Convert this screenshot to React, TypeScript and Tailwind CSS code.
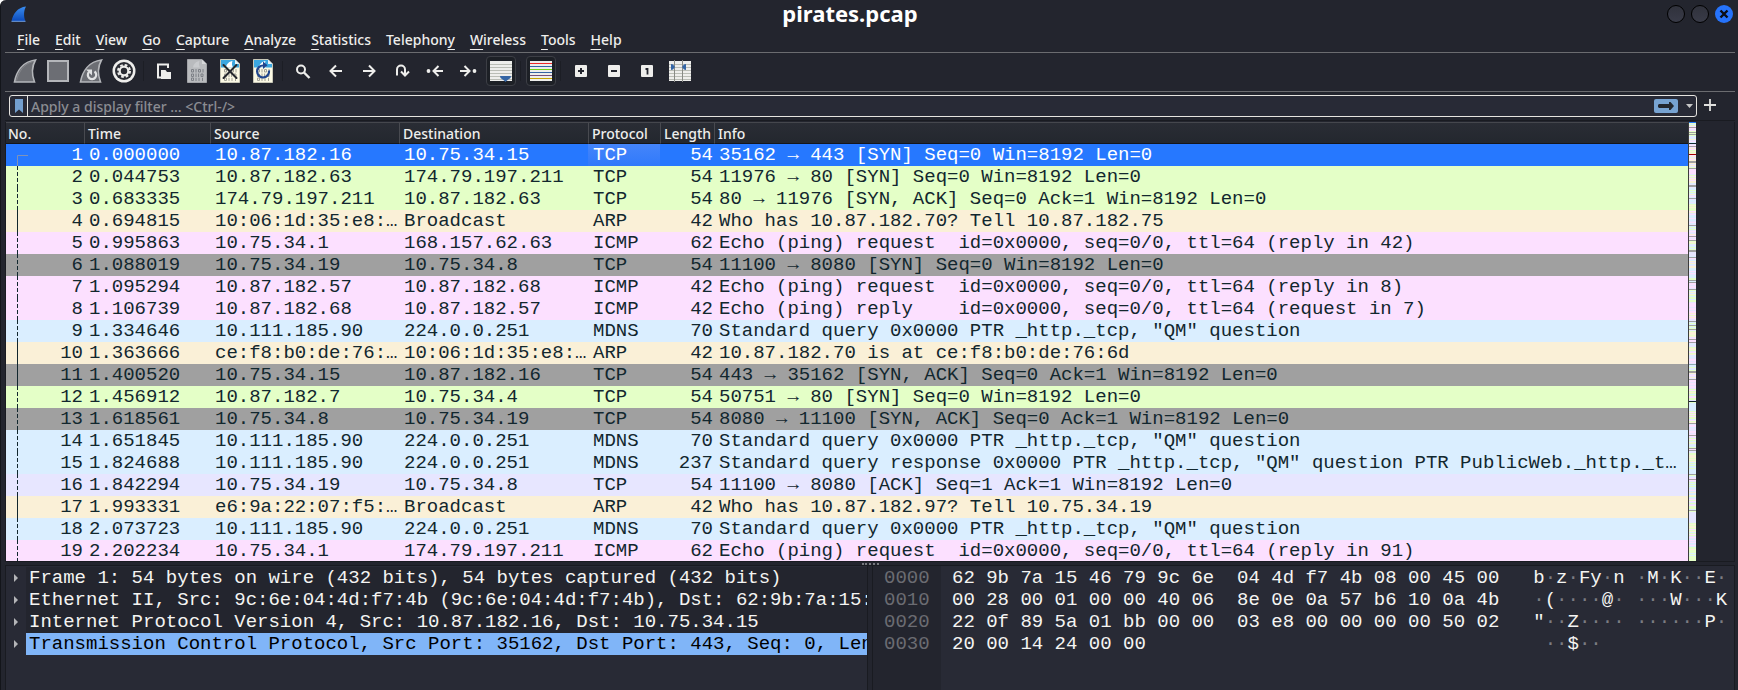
import type { ReactNode } from "react";

const tones = {
  tcp: "bg-[#e7e6ff]",
  http: "bg-[#e4ffc7]",
  arp: "bg-[#faf0d7]",
  icmp: "bg-[#fce0ff]",
  syn: "bg-[#a0a0a0]",
  udp: "bg-[#daeeff]",
  selected: "bg-[#2678ff] text-white",
};

type Tone = keyof typeof tones;
type Packet = [Tone, string, string, string, string, string, string];

const packets: Packet[] = [
  ["selected", "0.000000", "10.87.182.16", "10.75.34.15", "TCP", "54", "35162 → 443 [SYN] Seq=0 Win=8192 Len=0"],
  ["http", "0.044753", "10.87.182.63", "174.79.197.211", "TCP", "54", "11976 → 80 [SYN] Seq=0 Win=8192 Len=0"],
  ["http", "0.683335", "174.79.197.211", "10.87.182.63", "TCP", "54", "80 → 11976 [SYN, ACK] Seq=0 Ack=1 Win=8192 Len=0"],
  ["arp", "0.694815", "10:06:1d:35:e8:…", "Broadcast", "ARP", "42", "Who has 10.87.182.70? Tell 10.87.182.75"],
  ["icmp", "0.995863", "10.75.34.1", "168.157.62.63", "ICMP", "62", "Echo (ping) request  id=0x0000, seq=0/0, ttl=64 (reply in 42)"],
  ["syn", "1.088019", "10.75.34.19", "10.75.34.8", "TCP", "54", "11100 → 8080 [SYN] Seq=0 Win=8192 Len=0"],
  ["icmp", "1.095294", "10.87.182.57", "10.87.182.68", "ICMP", "42", "Echo (ping) request  id=0x0000, seq=0/0, ttl=64 (reply in 8)"],
  ["icmp", "1.106739", "10.87.182.68", "10.87.182.57", "ICMP", "42", "Echo (ping) reply    id=0x0000, seq=0/0, ttl=64 (request in 7)"],
  ["udp", "1.334646", "10.111.185.90", "224.0.0.251", "MDNS", "70", 'Standard query 0x0000 PTR _http._tcp, "QM" question'],
  ["arp", "1.363666", "ce:f8:b0:de:76:…", "10:06:1d:35:e8:…", "ARP", "42", "10.87.182.70 is at ce:f8:b0:de:76:6d"],
  ["syn", "1.400520", "10.75.34.15", "10.87.182.16", "TCP", "54", "443 → 35162 [SYN, ACK] Seq=0 Ack=1 Win=8192 Len=0"],
  ["http", "1.456912", "10.87.182.7", "10.75.34.4", "TCP", "54", "50751 → 80 [SYN] Seq=0 Win=8192 Len=0"],
  ["syn", "1.618561", "10.75.34.8", "10.75.34.19", "TCP", "54", "8080 → 11100 [SYN, ACK] Seq=0 Ack=1 Win=8192 Len=0"],
  ["udp", "1.651845", "10.111.185.90", "224.0.0.251", "MDNS", "70", 'Standard query 0x0000 PTR _http._tcp, "QM" question'],
  ["udp", "1.824688", "10.111.185.90", "224.0.0.251", "MDNS", "237", 'Standard query response 0x0000 PTR _http._tcp, "QM" question PTR PublicWeb._http._t…'],
  ["tcp", "1.842294", "10.75.34.19", "10.75.34.8", "TCP", "54", "11100 → 8080 [ACK] Seq=1 Ack=1 Win=8192 Len=0"],
  ["arp", "1.993331", "e6:9a:22:07:f5:…", "Broadcast", "ARP", "42", "Who has 10.87.182.97? Tell 10.75.34.19"],
  ["udp", "2.073723", "10.111.185.90", "224.0.0.251", "MDNS", "70", 'Standard query 0x0000 PTR _http._tcp, "QM" question'],
  ["icmp", "2.202234", "10.75.34.1", "174.79.197.211", "ICMP", "62", "Echo (ping) request  id=0x0000, seq=0/0, ttl=64 (reply in 91)"],
];

const columns = [
  { name: "No.", width: "w-[78px]" },
  { name: "Time", width: "w-[126px]" },
  { name: "Source", width: "w-[189px]" },
  { name: "Destination", width: "w-[189px]" },
  { name: "Protocol", width: "w-[72px]" },
  { name: "Length", width: "w-[54px]" },
  { name: "Info", width: "" },
];

const menus: [string, string, string][] = [
  ["", "F", "ile"],
  ["", "E", "dit"],
  ["", "V", "iew"],
  ["", "G", "o"],
  ["", "C", "apture"],
  ["", "A", "nalyze"],
  ["", "S", "tatistics"],
  ["Telephon", "y", ""],
  ["", "W", "ireless"],
  ["", "T", "ools"],
  ["", "H", "elp"],
];

const details = [
  "Frame 1: 54 bytes on wire (432 bits), 54 bytes captured (432 bits)",
  "Ethernet II, Src: 9c:6e:04:4d:f7:4b (9c:6e:04:4d:f7:4b), Dst: 62:9b:7a:15:",
  "Internet Protocol Version 4, Src: 10.87.182.16, Dst: 10.75.34.15",
  "Transmission Control Protocol, Src Port: 35162, Dst Port: 443, Seq: 0, Len",
];

const bytes: [string, string, string][] = [
  ["0000", "62 9b 7a 15 46 79 9c 6e  04 4d f7 4b 08 00 45 00", "b·z·Fy·n ·M·K··E·"],
  ["0010", "00 28 00 01 00 00 40 06  8e 0e 0a 57 b6 10 0a 4b", "·(····@· ···W···K"],
  ["0020", "22 0f 89 5a 01 bb 00 00  03 e8 00 00 00 00 50 02", '"··Z···· ······P·'],
  ["0030", "20 00 14 24 00 00", " ··$··"],
];

const stripeColors: Record<string, string> = {
  B: "#2678ff",
  g: "#e4ffc7",
  y: "#faf0d7",
  p: "#fce0ff",
  x: "#a0a0a0",
  m: "#daeeff",
  l: "#e7e6ff",
  k: "#12272e",
  r: "#a40000",
  t: "#8fa9b0",
};

const stripes = [
  "Bgmgpxplpgxgxgmlmylpmk",
  "lpxpypgygyrpylypyxxylylgx",
  "ppppplgpgpypyymlxxlmmgmgmylpmx",
  "lmmlmgygygggpylpmmmpmmlpmlxmgmglpllypx",
  "plpxgyglmmgmgxxllllmxplmylymlyymmmpmplmmmgg",
  "xmxpplpplxgmymygmggmgglpppplpplppypgpypll",
  "xmgmxgmgxlgyyygylpxpxlmllgyyglpgymlmlpplpl",
  "tmmglmgxxylplylxpplpplpplgpgygmgppggl",
  "kgmmmmmmmmgpgpgpggmpgyxlppmlllpplpx",
  "plgpgmyglmmgxpxllggyyygygymgmgmmgmmmmm",
  "xgmlpxplgmgmgmmlpmymmygmlpgpmglpgggmx",
  "glllllllllllgygyygpgymgpglplmplpmlpmggygggmgmggggg",
].join("");

function Icon({ children }: { children: ReactNode }) {
  return (
    <svg viewBox="0 0 24 24" className="size-6 shrink-0" fill="none" aria-hidden="true">
      {children}
    </svg>
  );
}

const finPath = "M1.5 23C3.5 12 10 2.500 22.500 1C18.500 8 18.500 15 21.500 23Z";

function Page({ gray }: { gray?: boolean }) {
  return (
    <>
      <path d="M2.500 .5H17L21.500 5V23.500H2.500Z" fill={gray ? "#b9bbbe" : "#fbf9e4"} stroke={gray ? "#a2a4a8" : "#c9c8b8"} />
      {!gray && <path d="M3 1H17L21 5V8.500H3Z" fill="#3ba7e0" />}
      <path d="M8 8.500C8.500 5 11 2.500 14.500 2C13.500 4.500 14 6.500 15 8.500Z" fill={gray ? "#c9cbce" : "#fff"} />
      <path d="M17 .5V5H21.500Z" fill={gray ? "#d6d8da" : "#e8f3f8"} />
      <g stroke={gray ? "#7d8086" : "#a3a297"}>
        <path d="M6.500 10.500h2v2.500h-2zM11 10v3.500M13.500 10.500h2v2.500h-2zM18 10v3.500" />
        <path d="M6.500 15h2v2.500h-2zM11 14.500v3.500M13.600 14.500v3.500M16 15h2v2.500h-2z" />
        <path d="M6.500 19h2v2.500h-2zM11 18.800v3.200M14 18.800v3.200M17.500 18.800v3.200" />
      </g>
    </>
  );
}

type Tool = { label: string; art: ReactNode; framed?: boolean } | null;

const tools: Tool[] = [
  {
    label: "Start capturing packets",
    art: (
      <>
        <path d={finPath} fill="#6c6e74" stroke="#b4b6ba" strokeWidth="1.600" />
        <path d="M3.500 21.500C6 12 11 5 19.500 2.800" stroke="#8a8c91" strokeWidth=".8" />
      </>
    ),
  },
  {
    label: "Stop capturing packets",
    art: <rect x="2" y="2" width="20" height="20" fill="#6c6e74" stroke="#b4b6ba" strokeWidth="2" />,
  },
  {
    label: "Restart current capture",
    art: (
      <>
        <path d={finPath} fill="#6c6e74" stroke="#b4b6ba" strokeWidth="1.600" />
        <path d="M10 13A4.200 4.200 0 1 0 15.500 12.500" stroke="#e2e3e4" strokeWidth="2.200" />
        <path d="M7 10.500H13V16.500Z" fill="#e2e3e4" />
      </>
    ),
  },
  {
    label: "Capture options",
    art: (
      <>
        <circle cx="12" cy="12" r="11.500" fill="#eeeeec" />
        <circle cx="12" cy="12" r="9" fill="#2a2c33" />
        <circle cx="12" cy="12" r="6" stroke="#eeeeec" strokeWidth="2" strokeDasharray="2.700 2.012" />
        <circle cx="12" cy="12" r="4.300" stroke="#eeeeec" strokeWidth="2.200" />
      </>
    ),
  },
  null,
  {
    label: "Open a capture file",
    art: (
      <>
        <path d="M9 18.500H6V5.500H16V9" stroke="#eeeeec" strokeWidth="2" />
        <path d="M9 11h4.500l1.500 2h4v7H9z" fill="#eeeeec" />
      </>
    ),
  },
  { label: "Save this capture file", art: <Page gray /> },
  {
    label: "Close this capture file",
    art: (
      <>
        <Page />
        <path d="M5.500 6L18.500 19M18.500 6L5.500 19" stroke="#25282d" strokeWidth="2" strokeLinecap="round" />
      </>
    ),
  },
  {
    label: "Reload this file",
    art: (
      <>
        <Page />
        <path d="M12.500 6.500A6 6 0 1 0 18 11.500" stroke="#20468e" strokeWidth="2.200" />
        <path d="M12 2.500V10L16.500 6.200Z" fill="#20468e" />
      </>
    ),
  },
  null,
  {
    label: "Find a packet",
    art: (
      <>
        <circle cx="10" cy="10.500" r="4" stroke="#eeeeec" strokeWidth="2" />
        <path d="M13 13.500L18.500 19" stroke="#eeeeec" strokeWidth="2.400" />
      </>
    ),
  },
  { label: "Previous packet", art: <path d="M18 12H7.500M12 6.500L6.500 12L12 17.500" stroke="#eeeeec" strokeWidth="2" /> },
  { label: "Next packet", art: <path d="M6 12H16.500M12 6.500L17.500 12L12 17.500" stroke="#eeeeec" strokeWidth="2" /> },
  {
    label: "Go to packet",
    art: <path d="M7 16.500V10.500A4 4 0 0 1 15 10.500V16M11 12.500L15 16.500L19 12.500" stroke="#eeeeec" strokeWidth="2" />,
  },
  {
    label: "First packet",
    art: (
      <>
        <path d="M20 12H11.500M15.500 7L10.500 12L15.500 17" stroke="#eeeeec" strokeWidth="2" />
        <circle cx="5.500" cy="12" r="1.900" fill="#eeeeec" />
      </>
    ),
  },
  {
    label: "Last packet",
    art: (
      <>
        <path d="M4 12H12.500M8.500 7L13.500 12L8.500 17" stroke="#eeeeec" strokeWidth="2" />
        <circle cx="18.500" cy="12" r="1.900" fill="#eeeeec" />
      </>
    ),
  },
  {
    label: "Auto scroll",
    framed: true,
    art: (
      <>
        <rect x="1" y="2" width="22" height="20" fill="#eeeeec" />
        <path d="M1 5.500h22M1 8.500h22M1 11.500h22M1 14.500h22M1 17.500h22M1 20.500h22" stroke="#babdb6" />
        <path d="M11 17H22L21.500 19L18 21.500L16.500 23L15 21.500L11.500 19Z" fill="#3465a4" />
      </>
    ),
  },
  null,
  {
    label: "Colorize packets",
    framed: true,
    art: (
      <>
        <rect x="1" y="2" width="22" height="20" fill="#eeeeec" />
        <path d="M1 4.500h22" stroke="#ef2929" />
        <path d="M1 7.500h22M1 13.500h22" stroke="#3465a4" />
        <path d="M1 10.500h22" stroke="#73d216" />
        <path d="M1 16.500h22" stroke="#75507b" />
        <path d="M1 19.500h22" stroke="#c4a000" />
      </>
    ),
  },
  null,
  {
    label: "Zoom in",
    art: (
      <>
        <rect x="6" y="6" width="12" height="12" rx="1" fill="#eeeeec" />
        <path d="M9 12h6M12 9v6" stroke="#23252e" strokeWidth="2" />
      </>
    ),
  },
  {
    label: "Zoom out",
    art: (
      <>
        <rect x="6" y="6" width="12" height="12" rx="1" fill="#eeeeec" />
        <path d="M9 12h6" stroke="#23252e" strokeWidth="2" />
      </>
    ),
  },
  {
    label: "Normal size",
    art: (
      <>
        <rect x="6" y="6" width="12" height="12" rx="1" fill="#eeeeec" />
        <path d="M10.500 10h2v5.500" stroke="#23252e" strokeWidth="1.800" />
      </>
    ),
  },
  {
    label: "Resize columns",
    art: (
      <>
        <rect x="1" y="2" width="22" height="20" fill="#eeeeec" />
        <path d="M1 5.500h22M1 8.500h22M1 11.500h22M1 14.500h22M1 17.500h22M1 20.500h22" stroke="#babdb6" />
        <path d="M6.500 1v22M14.500 1v22" stroke="#888a85" />
        <path d="M3 5L5 5.500L7 8L5 10.500L3 11ZM18 5L16 5.500L14 8L16 10.500L18 11Z" fill="#3465a4" />
      </>
    ),
  },
];

function Relation({ index, tone }: { index: number; tone: Tone }) {
  if (index === 0) {
    return (
      <svg width="24" height="22" fill="none" aria-hidden="true">
        <path d="M11.500 22V11.500H22" stroke="#7f93b8" />
      </svg>
    );
  }
  const solid = tone === "arp" || index === 10;
  return (
    <svg width="24" height="22" fill="none" aria-hidden="true">
      <path d="M11.500 0V22" stroke="#12272e" strokeDasharray={solid ? undefined : "4 2"} />
    </svg>
  );
}

function PacketTable() {
  return (
    <table className="w-full table-fixed border-separate border-spacing-0 text-left">
      <colgroup>
        {columns.map((c) => (
          <col key={c.name} className={c.width} />
        ))}
      </colgroup>
      <thead>
        <tr className="bg-linear-to-b from-[#2a2d35] to-[#23272e] font-['Noto_Sans'] text-sm leading-[18px] text-[#eeeeec]">
          {columns.map((c) => (
            <th
              key={c.name}
              scope="col"
              className="h-[22px] border-t border-b border-l border-t-[#45474d] border-b-[#14161b] border-l-[#484a50] p-0 pt-[2px] pl-[3px] font-medium first:border-l-0 first:pl-[2px]"
            >
              {c.name}
            </th>
          ))}
        </tr>
      </thead>
      <tbody className="whitespace-pre text-[#12272e]">
        {packets.map(([tone, time, source, destination, protocol, length, info], i) => (
          <tr key={time} className={`h-[22px] ${tones[tone]}`}>
            <td className="p-0 pr-px">
              <div className="flex h-[22px] justify-between">
                <Relation index={i} tone={tone} />
                {i + 1}
              </div>
            </td>
            <td className="p-0 pl-[5px]">{time}</td>
            <td className="p-0 pl-[5px]">{source}</td>
            <td className="p-0 pl-[5px]">{destination}</td>
            <td className={`p-0 pl-[5px] ${i === 0 ? "bg-linear-to-b from-[#4485fa] to-[#3079fb]" : ""}`}>{protocol}</td>
            <td className="p-0 pr-px text-right">{length}</td>
            <td className="overflow-hidden p-0 pl-[5px]">{info}</td>
          </tr>
        ))}
      </tbody>
    </table>
  );
}

function Minimap() {
  return (
    <svg viewBox="0 0 7 438" preserveAspectRatio="none" className="h-full w-[7px] shrink-0" shapeRendering="crispEdges" aria-hidden="true">
      {[...stripes].map((s, i) => (
        <rect key={i} y={i} width="7" height="1" fill={stripeColors[s]} />
      ))}
    </svg>
  );
}

export default function App() {
  return (
    <div className="flex h-screen min-h-[400px] flex-col overflow-hidden rounded-tl-md border-l border-[#13151a] bg-[#23252e] font-['Noto_Sans',sans-serif] text-sm text-[#eeeeec]">
      <header className="grid h-7 shrink-0 grid-cols-[40px_1fr_74px] items-center pr-[5px]">
        <svg viewBox="0 0 16 16" className="ml-[10px] size-4" aria-hidden="true">
          <defs>
            <linearGradient id="fin" x1="0" y1="0" x2="0" y2="1">
              <stop offset="0" stopColor="#3a8df0" />
              <stop offset="1" stopColor="#0a48b8" />
            </linearGradient>
          </defs>
          <path d="M.5 15.500C2 7.500 6.500 1.500 15 .5C12.500 5 12.500 10.500 14.500 15.500Z" fill="url(#fin)" />
          <path d="M.5 15.300H14.500" stroke="#8db9f0" strokeWidth=".8" />
        </svg>
        <h1 className="pb-[2px] text-center text-[22px] leading-6 font-bold text-white">pirates.pcap</h1>
        <div className="flex justify-end gap-[6px]">
          <button aria-label="Minimize" className="size-[18px] rounded-full border border-black bg-linear-to-b from-[#30323c] to-[#393b48]" />
          <button aria-label="Maximize" className="size-[18px] rounded-full border border-black bg-linear-to-b from-[#30323c] to-[#393b48]" />
          <button aria-label="Close" className="flex size-[18px] items-center justify-center rounded-full bg-[#2673fb]">
            <svg viewBox="0 0 10 10" className="size-[10px]" aria-hidden="true">
              <path d="M1.500 1.500L8.500 8.500M8.500 1.500L1.500 8.500" stroke="#0b0d14" strokeWidth="2.400" />
            </svg>
          </button>
        </div>
      </header>

      <nav className="mr-[3px] ml-1 flex h-[25px] shrink-0 gap-[15px] border-b border-[#6b6c70] pl-3">
        {menus.map(([before, key, after]) => (
          <button key={before + key + after} className="flex h-6 items-center leading-6 font-medium">
            <span>
              {before}
              <span className="underline decoration-1 underline-offset-4">{key}</span>
              {after}
            </span>
          </button>
        ))}
      </nav>

      <div className="mr-[3px] ml-1 flex h-[39px] shrink-0 items-center border-b border-[#6b6c70] pb-[2px] pl-[3px]">
        {tools.map((tool, i) =>
          tool ? (
            <button key={tool.label} aria-label={tool.label} className="flex h-[30px] w-[33px] items-center justify-center">
              {tool.framed ? (
                <span className="flex h-[30px] w-[30px] shrink-0 items-center justify-center rounded-sm border border-[#3c3e45] bg-[#1d2026]">
                  <Icon>{tool.art}</Icon>
                </span>
              ) : (
                <Icon>{tool.art}</Icon>
              )}
            </button>
          ) : (
            <span key={i} className="mx-[3px] h-5 w-px bg-[#1c1e25]" />
          ),
        )}
      </div>

      <div className="flex shrink-0 items-center py-[3px] pl-2">
        <div className="flex h-[22px] flex-1 items-center rounded-[3px] border border-[#e6e4e0] bg-[#282a36] pr-[3px]">
          <button aria-label="Bookmarks" className="flex h-full w-[18px] items-center justify-center border-r border-[#e6e4e0]">
            <svg viewBox="0 0 8 14" className="h-[14px] w-2" aria-hidden="true">
              <path d="M0 0H8V14L4 10.500L0 14Z" fill="#739fcf" />
            </svg>
          </button>
          <input
            aria-label="Display filter"
            placeholder="Apply a display filter … <Ctrl-/>"
            className="h-5 min-w-0 flex-1 bg-transparent pt-px pl-[3px] text-sm font-medium outline-none placeholder:text-[#8b8c92]"
          />
          <button aria-label="Apply filter" className="mr-2 flex h-[14px] w-6 items-center justify-center rounded-[2px] bg-[#77a3d2]">
            <svg viewBox="0 0 16 8" className="h-2 w-4" aria-hidden="true">
              <path d="M1 2H11V0H12.500L16 4L12.500 8H11V6H1L0 5V3Z" fill="#23272e" />
            </svg>
          </button>
          <button aria-label="Recent filters" className="flex h-5 w-[7px] items-center">
            <svg viewBox="0 0 7 4" className="h-1 w-[7px]" aria-hidden="true">
              <path d="M0 0H7L3.500 4Z" fill="#c8c8c8" />
            </svg>
          </button>
        </div>
        <button aria-label="Add filter button" className="mr-5 ml-1 flex h-5 w-[17px] items-center justify-center pb-[2px]">
          <svg viewBox="0 0 12 12" className="size-3" aria-hidden="true">
            <path d="M0 6H12M6 0V12" stroke="#e0e0de" strokeWidth="1.800" />
          </svg>
        </button>
      </div>

      <main className="mr-[3px] ml-1 flex min-h-0 flex-1 flex-col border-t border-[#191b21] pt-px">
        <section aria-label="Packet list" className="flex min-h-0 flex-1 border-r border-l border-[#191b21] font-['Liberation_Mono',monospace] text-[19px] leading-[22px]">
          <div className="min-w-0 flex-1 overflow-hidden border-r border-[#3c3c3c]">
            <PacketTable />
          </div>
          <Minimap />
          <div className="w-[38px] shrink-0" />
        </section>

        <div className="flex h-[5px] shrink-0 items-center justify-center border-t border-b border-[#191b21]">
          <span className="h-[2px] w-[17px] border-b-2 border-dotted border-[#77797e]" />
        </div>

        <section className="flex h-[124px] shrink-0 border-l border-[#191b21] font-['Liberation_Mono',monospace] text-[19px] leading-[22px] whitespace-pre text-[#f4f4f2]">
          <ul aria-label="Packet details" className="min-w-0 flex-1 overflow-hidden border-r border-[#191b21] bg-[#282a35] pt-px">
            {details.map((line, i) => (
              <li key={line} className="flex h-[22px]">
                <button aria-label="Expand" className="flex w-5 shrink-0 items-center justify-center">
                  <svg viewBox="0 0 4 8" className="h-2 w-1" aria-hidden="true">
                    <path d="M0 0L4 4L0 8Z" fill="#b4b5b8" />
                  </svg>
                </button>
                <span className={`min-w-0 flex-1 overflow-hidden pl-[3px] ${i === 3 ? "bg-[#80b5f8] text-black" : "bg-[#23252e]"}`}>{line}</span>
              </li>
            ))}
          </ul>
          <div className="flex w-[867px] shrink-0 pl-1">
            <div className="w-full border-r border-l border-[#191b21] bg-[#282a35]">
              <table className="h-full border-collapse text-left">
                <tbody>
                  <tr className="h-px">
                    <td className="w-[68px] bg-[#23252e] p-0" />
                    <td colSpan={2} className="p-0" />
                  </tr>
                  {bytes.map(([offset, hex, ascii]) => (
                    <tr key={offset} className="h-[22px]">
                      <th scope="row" className="w-[68px] bg-[#23252e] p-0 pl-[11px] font-normal text-[#6b6c72]">
                        {offset}
                      </th>
                      <td className="p-0 pl-[11px]">{hex}</td>
                      <td className="p-0 pl-[34px]">
                        {[...ascii].map((c, i) => (
                          <span key={i} className={c === "·" ? "text-[#7b7c82]" : ""}>
                            {c}
                          </span>
                        ))}
                      </td>
                    </tr>
                  ))}
                  <tr>
                    <td className="bg-[#23252e] p-0" />
                    <td colSpan={2} className="p-0" />
                  </tr>
                </tbody>
              </table>
            </div>
          </div>
        </section>
      </main>
    </div>
  );
}
